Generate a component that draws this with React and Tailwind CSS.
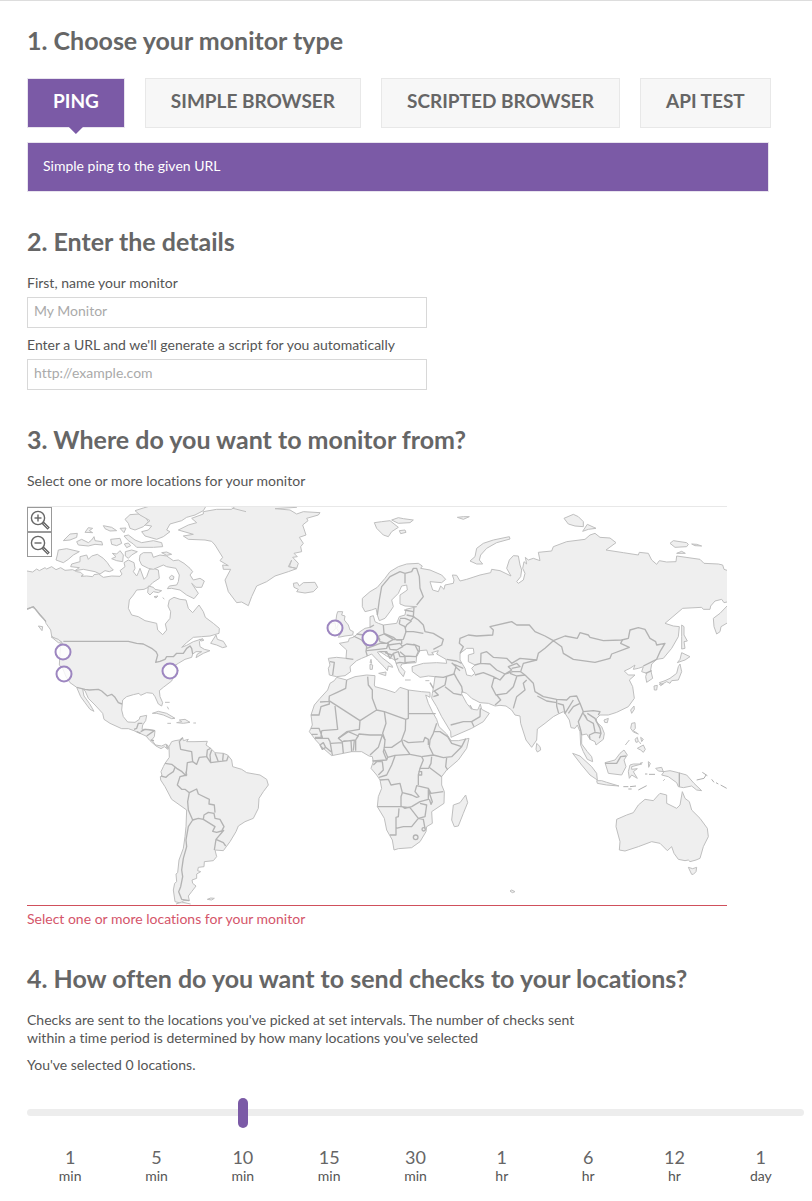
import React, { useState } from 'react';

const monitorTypes = [
  { name: 'Ping', text: 'Simple ping to the given URL' },
  { name: 'Simple Browser', text: 'Load a page in a real browser' },
  { name: 'Scripted Browser', text: 'Run a script in a real browser' },
  { name: 'API Test', text: 'Run a script against an API endpoint' },
];

const intervals = [
  ['1', 'min'],
  ['5', 'min'],
  ['10', 'min'],
  ['15', 'min'],
  ['30', 'min'],
  ['1', 'hr'],
  ['6', 'hr'],
  ['12', 'hr'],
  ['1', 'day'],
];

// pin positions as percentages of the map
const locations = [
  { name: 'Portland, OR, USA', x: 5.2, y: 36.4 },
  { name: 'San Francisco, CA, USA', x: 5.3, y: 41.9 },
  { name: 'Washington, DC, USA', x: 20.4, y: 41.1 },
  { name: 'Dublin, IE', x: 44, y: 30.4 },
  { name: 'Frankfurt, DE', x: 49, y: 32.9 },
];

const SectionTitle = ({ children }) => (
  <h2 className="text-[25px] leading-8 font-bold text-[#666]">{children}</h2>
);

const Zoom = ({ label, plus, onClick }) => (
  <button
    type="button"
    aria-label={label}
    onClick={onClick}
    className="flex size-[25px] items-center justify-center border border-[#999] bg-white text-[#666]"
  >
    <svg viewBox="0 0 20 20" className="size-5 shrink-0" fill="none" stroke="currentColor">
      <circle cx="8" cy="8" r="6.6" strokeWidth="1.4" />
      <path d="M4.5 8h7" strokeWidth="1.4" />
      {plus && <path d="M8 4.5v7" strokeWidth="1.4" />}
      <path d="M12.7 12.7l6 6" strokeWidth="3.2" />
      <path d="M13.6 13.6l4.4 4.4" stroke="#ccc" strokeWidth="1" />
    </svg>
  </button>
);

const WorldMap = () => (
  <svg
    viewBox="0 0 2100 1194"
    className="block w-full"
    fill="#efefef"
    stroke="#bfbfbf"
    strokeWidth="3"
    strokeLinejoin="round"
    aria-hidden="true"
  >
    {/* North and Central America */}
    <g transform="translate(-21 -21)">
      <path d="M15,213 L21,213 38,216 50,207 58,212 75,203 80,207 95,200 108,209 122,203 135,211 158,209 170,215 182,217 190,225 183,229 200,228 218,230 222,224 236,222 250,232 275,228 300,229 306,222 300,212 315,200 312,188 325,180 342,188 345,205 340,215 350,228 355,218 360,205 372,238 380,230 388,208 400,205 415,210 418,235 398,248 385,262 372,268 350,270 340,285 328,300 325,325 335,345 355,350 375,362 410,370 413,390 428,404 440,390 436,372 450,355 452,335 444,318 448,300 462,292 480,298 498,300 505,325 518,338 537,315 550,335 556,352 580,370 598,385 597,400 570,408 545,410 520,412 500,428 485,442 500,436 520,425 548,416 538,425 540,440 553,448 570,452 550,460 528,473 532,462 545,455 528,455 518,462 515,472 495,478 475,490 462,498 475,510 460,530 455,543 430,562 418,572 420,590 428,608 425,618 415,612 405,590 398,580 380,578 362,586 357,580 340,584 320,590 308,600 305,630 310,650 323,666 345,667 358,658 360,650 380,646 377,662 368,675 366,688 385,688 405,692 403,710 395,720 407,735 425,738 438,732 447,740 444,748 433,740 423,746 408,738 390,722 378,708 360,700 342,692 325,686 305,686 270,670 252,658 248,640 225,615 205,595 195,572 188,568 192,588 208,610 222,634 210,628 195,608 182,590 170,562 150,548 138,530 128,505 118,495 120,460 122,432 125,425 110,420 95,408 92,390 78,370 75,360 62,345 45,325 35,322 15,328" />
      <path d="M180,170 L200,165 205,178 215,168 232,163 250,175 262,188 270,200 280,210 268,215 255,212 240,222 225,215 190,208 165,212 178,203 152,200 155,192 180,185Z M115,150 L140,146 178,155 160,165 145,178 130,188 108,180 112,165Z M130,122 L150,102 172,100 170,112 150,120Z M195,97 L218,98 208,92 218,85 205,83Z M170,125 L185,118 205,128 215,120 222,110 225,122 245,125 248,135 225,133 205,138 175,135Z M250,77 L275,82 290,92 270,93 255,86Z M272,118 L300,115 305,130 290,137 275,133Z M300,85 L318,84 312,98Z M313,132 L325,129 332,137 320,143Z M312,108 L325,105 345,120 365,128 400,122 425,128 428,140 400,142 350,142 340,132 325,122Z M277,160 L290,162 300,152 310,165 308,185 290,182 275,176 288,170Z M316,155 L335,150 352,155 335,165 325,175 316,168Z M315,58 L330,44 355,42 375,50 385,65 370,80 345,90 330,85 325,70Z" />
      <path d="M345,32 L370,24 400,15 H560 L550,32 525,45 500,52 485,62 450,72 440,90 450,95 430,110 410,118 375,108 365,95 385,90 395,78 375,75 390,62 360,45Z" />
      <path d="M360,165 L370,158 395,158 400,172 420,165 440,168 460,182 475,180 492,190 510,205 518,215 510,225 520,240 540,235 553,243 545,262 528,262 515,250 535,280 522,296 500,285 480,270 455,265 442,266 448,258 470,255 475,245 478,225 468,205 440,200 430,195 400,208 385,205 365,195 358,180Z M425,158 L440,156 455,163 440,166Z M448,232 L455,226 462,230 460,238 451,239Z M385,258 L400,262 405,268 425,272 415,278 400,275 390,285 383,278Z M402,290 L414,288 408,294Z M428,293 L433,297" />
      <path d="M93,410 L115,418 128,430 115,428Z M55,378 L68,380 66,392Z M572,430 L588,405 592,418 610,424 620,440 608,443 590,435Z M537,418 L552,420 545,423Z" />
      <g stroke="#b3b3b3" strokeWidth="4" fill="none">
        <path d="M130,424 H325 L350,430 370,432 395,445 408,455 413,465 407,487 420,484 435,478 440,470 460,470 470,460 490,460 500,445 510,438 515,445 518,462" />
        <path d="M21,328 L40,320 60,345 78,365 M170,562 L195,568 208,570 235,568 245,573 262,588 275,583 285,592 295,608 306,612" />
        <path d="M342,688 L350,685 355,670 367,670 M350,695 L362,700 M362,695 L375,688 405,692 M380,708 L403,692 M392,720 L402,722 M440,735 L442,745" />
      </g>
    </g>

    {/* Greenland and Iceland */}
    <g transform="translate(399 -21)">
      <path d="M130,35 L170,28 215,28 230,15 H400 L410,22 345,26 390,30 410,42 430,35 480,38 475,45 440,55 444,62 428,75 438,105 418,112 430,130 422,140 425,155 402,160 412,170 398,172 415,190 410,205 385,200 395,180 388,200 410,206 385,215 345,228 320,245 290,258 275,290 265,317 245,306 230,308 205,275 195,240 212,208 190,208 188,195 205,197 180,182 188,172 165,135 155,124 135,120 85,118 70,108 100,103 55,90 85,75 110,68 95,55 130,42Z" />
      <path d="M400,250 L412,248 418,258 430,248 465,247 473,262 460,275 435,279 410,275 415,268 402,262Z" />
      <path d="M215,24 L258,35" fill="none" />
    </g>

    {/* Caribbean and South America */}
    <g transform="translate(99 489)">
      <path d="M277,130 L295,124 320,130 345,145 335,146 310,135 290,130Z M350,158 L365,155 358,150 375,148 390,157 370,160Z M400,159 H408 M322,160 H333 M315,97 H329 M322,110 L326,118" />
      <path d="M327,230 L335,215 345,212 358,210 368,203 370,212 385,208 380,215 405,215 442,214 438,225 452,235 465,248 490,250 503,255 515,270 518,290 545,298 560,308 600,315 620,328 625,345 610,365 597,385 595,415 580,445 555,455 535,468 528,485 510,515 490,542 465,540 470,560 460,572 433,575 432,590 415,592 413,602 422,605 410,612 410,625 396,630 398,640 408,648 395,665 385,678 388,692 370,692 365,700 345,695 340,660 344,640 350,635 348,612 353,608 357,570 370,535 375,500 378,470 380,420 335,388 315,350 302,330 301,320 306,316 303,305 310,290 315,280 328,262Z" />
      <path d="M348,702 L365,696 392,702 M442,688 L452,684 463,685 455,690Z" />
      <g stroke="#b3b3b3" strokeWidth="4" fill="none">
        <path d="M368,203 L358,215 362,238 395,245 398,275 410,283 418,262 440,260 442,240 452,235 M398,275 L382,278 378,317 366,305 350,295 335,283 315,280 M345,292 L340,305 325,315 318,322 303,318" />
        <path d="M378,305 L380,315 360,320 352,345 365,358 375,358 388,368 410,357 415,372 448,388 447,402 463,405 465,428 M388,368 L383,395 385,420 398,450 385,470 378,510 380,530 370,565 365,600 368,620 362,650 356,665 365,688 388,692" />
        <path d="M398,450 L415,445 430,448 432,435 445,427 462,430 465,445 480,448 492,470 485,483 470,487 458,484 465,470 430,448 M492,480 L468,508 463,540 M468,508 L490,518 497,528 M440,260 L452,278 475,275 500,272 505,258 M455,240 L450,255 452,278 M465,250 L470,262 475,275 M490,250 L488,272" />
      </g>
    </g>

    {/* Europe and Asia mainland */}
    <g transform="translate(789 -21)">
      <path d="M217,295 L240,275 262,262 285,235 300,215 325,200 350,192 385,190 397,198 392,205 420,210 455,225 467,238 455,248 420,245 428,270 445,275 452,258 462,268 465,255 490,250 492,240 487,225 500,226 510,243 530,238 570,225 602,218 605,208 630,212 663,228 650,205 658,180 670,167 685,168 690,195 695,210 692,230 680,245 685,250 700,240 705,220 698,205 702,185 710,192 706,172 715,180 730,175 750,182 745,157 785,153 790,140 830,125 885,118 900,105 915,100 930,112 960,114 978,128 948,150 1000,158 1045,165 1048,157 1075,160 1085,180 1100,193 1108,182 1130,186 1158,185 1160,168 1230,178 1242,190 1285,192 1298,195 1302,208 1320,214 1320,304 1302,308 1295,298 1275,303 1262,318 1260,328 1240,328 1235,322 1178,325 1125,370 1150,378 1168,380 1165,410 1145,445 1120,475 1100,478 1085,492 1082,510 1088,535 1070,547 1067,530 1070,520 1055,515 1060,500 1045,505 1030,508 1035,495 1020,505 1003,513 1015,525 1035,525 1018,540 1028,560 1033,595 1015,620 980,637 955,645 930,645 920,655 918,665 935,680 943,700 940,718 918,735 915,725 900,718 890,702 875,705 875,732 892,755 905,770 908,785 892,778 880,755 872,735 870,695 862,675 855,685 843,683 838,660 825,640 820,635 805,642 790,650 765,670 742,687 740,720 725,742 708,720 692,670 690,648 675,645 665,630 648,618 630,616 615,618 595,610 570,608 555,600 545,595 530,580 515,575 515,582 530,610 545,628 540,615 548,628 563,630 571,612 575,628 598,640 580,665 545,685 483,712 482,695 455,650 440,620 425,595 427,580 430,565 435,530 415,528 390,532 367,515 366,500 400,490 440,488 470,490 468,478 440,462 445,452 425,458 432,464 415,465 410,450 390,452 380,470 378,488 350,490 335,492 332,500 345,515 340,530 328,515 320,495 315,480 290,468 270,455 262,456 275,472 305,495 308,502 295,498 292,512 282,500 262,480 245,462 232,468 215,475 200,482 180,500 182,515 165,527 140,530 118,525 115,505 120,495 115,475 140,472 168,475 170,450 148,430 175,425 178,415 190,412 210,395 225,385 240,382 240,350 250,347 255,365 265,370 280,375 320,370 328,350 345,345 348,328 380,320 345,318 330,312 330,285 352,270 350,255 335,258 325,280 305,300 310,320 300,335 285,355 268,362 262,345 258,325 245,330 225,335 217,320Z" />
      <path fill="#fff" d="M510,460 L530,445 550,445 552,460 535,465 535,485 555,495 545,505 555,520 545,528 530,525 525,505 510,480Z" />
      <path d="M140,345 L143,335 158,335 155,345 165,348 163,360 175,375 180,390 190,395 188,405 165,408 145,412 150,403 140,385 145,372 138,360Z M118,372 L135,368 138,385 125,398 115,395Z" />
      <path d="M253,68 L275,65 300,62 325,82 305,95 295,110 280,105 260,85Z M305,60 L325,53 340,56 370,60 360,68 325,70Z M328,92 L345,90 348,97 332,101Z M502,52 L520,50 538,50 520,58Z" />
      <path d="M540,183 L555,170 560,145 580,130 610,120 658,110 660,117 620,128 590,145 572,165 568,180 578,192 560,192Z" />
      <path d="M243,478 L245,490 240,488Z M240,493 L248,495 247,508 240,508Z M266,520 L288,516 287,527Z M345,540 H362 M406,542 H418" />
      <g stroke="#b3b3b3" strokeWidth="4" fill="none">
        <path d="M262,345 L268,300 275,260 300,230 330,215 345,220 365,215 370,205 380,205 388,230 390,265 400,290 380,315 M345,220 L345,250 M343,330 L370,335 M330,355 L345,355 362,362 372,350 350,345 M372,322 L370,350 385,360 400,375 405,395 430,400 460,418 455,435 430,448 M345,385 L350,375 365,362 M345,395 L370,395 400,400" />
        <path d="M280,375 L282,400 310,412 320,420 340,418 348,395 345,380 328,372 M328,372 L330,358 M190,408 L215,420 230,440 228,455 232,468 M200,402 L222,405 M262,410 L282,402 310,418 290,430 270,425Z M230,445 L245,440 270,430 295,430 290,445 265,448 230,452 M295,435 L330,430 338,440 320,450 300,448Z M310,418 L335,420 335,432 M335,440 L350,432 375,435 385,455 378,470 345,468 330,455 M345,468 L345,488 375,485 M370,432 L388,440 388,455" />
        <path d="M268,455 L290,455 300,475 310,460 325,455 330,470 345,470 M285,458 L305,465 M310,460 L315,480 325,475 M318,490 L330,487 350,490 M270,420 L265,410 M240,382 L252,375 M120,485 L133,487 128,525 M168,475 L190,478" />
        <path d="M510,460 L520,440 508,430 510,415 535,405 560,408 608,405 610,390 600,380 665,365 680,375 718,375 735,395 765,408 790,422 825,408 862,415 870,398 895,405 900,412 940,422 995,420 1015,415 1020,390 1045,383 1065,388 1080,415 1097,425 1100,435 1125,430 1110,455 1100,478 1060,498" />
        <path d="M790,422 L815,440 820,460 850,478 915,487 960,475 965,462 1018,442 992,430 998,418 M790,422 L765,445 745,460 740,480 700,490 692,515 705,525 730,550 735,575 760,590 800,598 830,600 840,590 860,588 870,610 880,635 910,632 930,635 925,645" />
        <path d="M572,490 L573,460 590,455 610,472 650,475 665,490 690,475 740,480 M555,495 L572,490 600,492 620,510 645,522 665,510 655,500 680,490 690,500 665,505 M645,522 L668,515 692,515 M660,520 L680,528 705,525 M555,525 L580,518 610,530 630,540 645,522 M613,530 L605,560 618,585 650,580 670,560 680,530 M620,585 L632,600 615,615 M710,540 L700,550 705,570 680,590 670,625" />
        <path d="M485,488 L498,500 492,520 500,535 515,560 518,578 M435,530 L460,532 492,522 M470,530 L465,555 430,575 M465,560 L490,580 515,585 M430,590 L445,585 432,572 M482,675 L520,665 545,665 570,650 571,625 M545,665 L552,680 M470,478 L500,483 515,490 M490,492 L520,505 M498,502 L510,512 M430,565 L420,548" />
        <path d="M742,588 L770,603 800,608 M800,600 L800,618 806,640 M803,610 L820,615 825,640 850,600 M870,610 L850,620 835,640 M880,635 L865,665 872,690 875,705 M880,640 L892,660 910,670 915,695 M892,640 L915,655 930,685 933,700 928,715 M900,718 L898,705 915,697 933,700 M1067,520 L1085,512 M892,660 L885,645" />
      </g>
    </g>

    {/* Russian arctic islands, Kamchatka, Japan */}
    <g transform="translate(1419 -21)">
      <path d="M192,55 L220,43 235,50 250,65 250,80 225,78 205,72Z M248,94 L262,73 288,85 265,88Z M510,130 L520,122 560,128 565,133 560,140 525,142Z M575,132 L590,133 605,138 585,137Z M530,160 L545,154 556,160Z" />
      <path d="M690,310 L681,318 660,340 640,355 642,380 650,402 660,395 663,380 690,364" />
      <path d="M545,375 L552,380 552,405 562,423 552,425 555,445 545,447 545,410Z M532,488 L540,478 545,458 570,470 555,480 540,485Z M540,492 L545,515 535,540 515,542 510,550 500,545 485,553 478,548 495,542 510,535 530,520 535,500Z M462,558 L472,556 470,570 463,570Z M478,552 L490,552 482,557Z" />
    </g>

    {/* Africa */}
    <g transform="translate(804 459)">
      <path d="M125,52 L155,60 180,50 215,45 240,47 238,75 240,80 270,88 300,98 315,82 340,90 380,95 405,97 405,112 392,105 400,130 412,155 425,178 432,200 455,222 468,242 490,242 522,235 515,265 490,300 455,330 440,350 440,375 448,395 447,430 410,455 412,490 395,500 393,515 375,545 350,563 310,566 297,570 292,540 275,510 268,475 247,440 250,410 260,385 255,360 245,345 228,325 235,305 232,290 222,288 200,275 170,275 145,280 110,287 85,265 62,240 43,215 52,195 48,165 58,135 75,115 98,90 105,70 118,62Z" />
      <path d="M512,405 L518,428 505,460 490,498 478,500 470,480 475,435 495,428Z M645,693 L650,690 660,695 652,698Z" />
      <g stroke="#b3b3b3" strokeWidth="4" fill="none">
        <path d="M155,60 L152,85 125,98 103,108 102,122 195,182 245,150 232,115 232,90 220,75 218,50 M48,165 H72 L78,140 103,132 103,124 75,126 M120,138 L128,208 80,212 M195,182 L193,208 155,215 130,235 M245,150 L268,155 332,178 M340,90 V175 L332,178 331,210 320,240 325,255 345,283 380,290 M340,161 H422" />
        <path d="M268,155 L273,190 263,220 270,240 268,262 290,262 322,240 M268,268 L278,292 300,286 345,283 M325,240 L340,248 385,245 390,232 400,238 400,255 M425,190 L415,220 405,240 403,260 415,285 445,293 470,290 500,260 470,250 458,230 435,215 418,215 M415,285 L380,290 M410,290 L408,310 402,322 440,350 M455,293 L452,320 458,330 M380,290 L385,300 375,325 402,325 M500,260 L512,236" />
        <path d="M300,288 L290,315 275,345 252,352 M255,360 L280,358 288,375 315,370 322,398 350,405 365,412 372,410 360,395 365,377 400,385 408,400 445,395 M370,375 L370,345 375,325 M370,335 H380 V345 H370 M322,398 L318,410 318,438 330,445 350,440 375,425 400,418 400,388 M247,440 L318,440 345,443 370,475 390,470 395,435 375,430 M312,445 L310,470 303,472 303,525 285,525 M303,505 L325,500 350,500 370,475 385,478 390,505 M400,390 L412,425 408,433 403,418" />
        <circle cx="362" cy="532" r="7" />
        <circle cx="386" cy="508" r="5" />
        <path d="M48,205 L72,205 82,232 60,232 M50,223 H68 M60,235 H100 L105,245 108,262 112,285 M75,255 L85,248 92,262 82,268Z M92,262 L108,275 M108,250 L142,248 145,280 M145,243 L168,242 170,275 M178,240 L175,272 M182,272 L182,240 192,222 225,225 262,225 250,262 225,285 M130,235 L160,215 190,228 182,240 142,245Z M80,212 L78,230 M262,225 L270,240 M268,262 L265,275 275,300 232,303 M235,315 L245,305 262,305 265,330 250,345 M275,300 L278,292" />
      </g>
    </g>

    {/* South East Asia and Australia */}
    <g transform="translate(1419 459)">
      <path d="M402,138 L403,148 395,160 392,150Z M312,180 L325,175 322,188 314,187Z M110,250 L120,260 122,270 112,276 108,268Z M395,190 L405,188 406,205 400,212 415,222 400,216 392,205Z M412,265 L430,255 436,268 430,277 422,270Z M405,238 L412,232 415,245 408,247Z M422,232 L430,238 425,245Z M376,255 L388,240 M418,245 L422,252" />
      <path d="M218,280 L240,288 275,320 290,340 292,360 270,345 245,315Z M290,362 L305,362 320,367 357,378 320,375 292,370Z M315,308 L345,300 360,280 372,270 382,285 372,300 378,320 365,345 325,340Z M388,355 L385,335 390,315 400,312 425,312 395,320 395,328 412,326 400,335 412,355 395,345Z M445,305 L451,310 446,322Z M467,325 L485,322 490,335 510,332 535,338 560,345 582,370 605,392 590,390 575,378 550,383 535,380 530,368 505,350 485,345 492,335 475,333Z" />
      <path d="M370,380 H385 M390,380 L408,378 M415,390 L440,377 M385,387 H395 M435,342 H442 M447,343 H465 M490,362 L494,358 M590,360 L612,355 618,345 M607,337 L622,347 M635,358 L642,367 M648,368 L655,372 M662,375 L680,385 M420,310 L428,308" fill="none" stroke="#afafaf" />
      <path d="M480,400 L500,405 500,430 530,445 540,435 547,395 555,415 568,425 575,450 600,475 622,505 625,530 610,560 600,595 588,600 570,605 565,600 555,602 535,598 522,580 515,560 502,572 480,550 455,545 415,560 375,573 358,570 360,545 348,500 350,478 380,465 400,458 415,435 435,418 460,422 475,405Z M565,622 L578,626 590,622 588,635 580,643 575,643Z" />
      <path d="M315,310 L350,310 362,290 378,288 M538,338 V380" fill="none" stroke="#b3b3b3" strokeWidth="4" />
    </g>
  </svg>
);

const App = () => {
  const [type, setType] = useState(0);
  const [selected, setSelected] = useState([]);
  const [interval, setInterval] = useState(2);
  const [zoom, setZoom] = useState(1);

  const toggle = (name) =>
    setSelected(selected.includes(name) ? selected.filter((n) => n !== name) : [...selected, name]);

  return (
    <main className="border-t border-[#ddd] bg-white pt-[23px] pr-2 pb-4 pl-[27px] font-['Lato',sans-serif] text-sm leading-[18px] text-[#555] [font-variant-ligatures:none]">
      {/* Monitor type */}
      <section>
        <SectionTitle>1. Choose your monitor type</SectionTitle>
        <div className="mt-[22px] flex flex-wrap gap-5">
          {monitorTypes.map((item, i) => (
            <button
              key={item.name}
              type="button"
              onClick={() => setType(i)}
              className={
                i === type
                  ? 'relative h-[50px] border border-[#e8e4ee] bg-[#7b5aa6] px-[25px] pb-1 text-[19px] font-bold text-white uppercase'
                  : 'relative h-[50px] border border-[#e8e8e8] bg-[#f7f7f7] px-[25px] pb-1 text-[19px] font-bold text-[#666] uppercase'
              }
            >
              {item.name}
              {i === type && (
                <span className="absolute top-full left-1/2 h-[7px] w-[14px] -translate-x-1/2 bg-[#7b5aa6] [clip-path:polygon(0_0,100%_0,50%_100%)]" />
              )}
            </button>
          ))}
        </div>
        <p className="mt-[14px] mr-[35px] flex h-[50px] items-center border border-[#e8e4ee] bg-[#7b5aa6] px-[15px] pb-[2px] text-white">
          {monitorTypes[type].text}
        </p>
      </section>

      {/* Details */}
      <section className="mt-[33px]">
        <SectionTitle>2. Enter the details</SectionTitle>
        <div className="mt-[17px] flex max-w-[400px] flex-col">
          <label htmlFor="name">First, name your monitor</label>
          <input
            id="name"
            type="text"
            placeholder="My Monitor"
            className="mt-[5px] h-[31px] border border-[#d8d8d8] px-[6px] pb-[5px] outline-none placeholder:text-[#aaa]"
          />
          <label htmlFor="url" className="mt-2">
            Enter a URL and we'll generate a script for you automatically
          </label>
          <input
            id="url"
            type="text"
            placeholder="http://example.com"
            className="mt-[5px] h-[31px] border border-[#d8d8d8] px-[6px] pb-[5px] outline-none placeholder:text-[#aaa]"
          />
        </div>
      </section>

      {/* Locations */}
      <section className="mt-[33px]">
        <SectionTitle>3. Where do you want to monitor from?</SectionTitle>
        <p className="mt-[17px]">Select one or more locations for your monitor</p>
        <div className="relative mt-4 max-w-[700px] overflow-hidden border-t border-b border-t-[#e8e8e8] border-b-[#d0505c]">
          <div className="relative origin-center" style={{ transform: zoom === 1 ? undefined : `scale(${zoom})` }}>
            <WorldMap />
            {locations.map((loc) => (
              <button
                key={loc.name}
                type="button"
                aria-label={loc.name}
                aria-pressed={selected.includes(loc.name)}
                onClick={() => toggle(loc.name)}
                className="absolute size-[17px] -translate-x-1/2 -translate-y-1/2 rounded-full border-2 border-[#9d86c0] bg-white/80 aria-pressed:bg-[#7b5aa6]"
                style={{ left: `${loc.x}%`, top: `${loc.y}%` }}
              />
            ))}
          </div>
          <div className="absolute top-0 left-0 flex flex-col">
            <Zoom label="Zoom in" plus onClick={() => setZoom(Math.min(zoom + 1, 4))} />
            <Zoom label="Zoom out" onClick={() => setZoom(Math.max(zoom - 1, 1))} />
          </div>
        </div>
        {selected.length === 0 && (
          <p className="mt-1 text-[#d4556a]">Select one or more locations for your monitor</p>
        )}
      </section>

      {/* Frequency */}
      <section className="mt-[34px]">
        <SectionTitle>4. How often do you want to send checks to your locations?</SectionTitle>
        <p className="mt-[17px] max-w-[560px]">
          Checks are sent to the locations you've picked at set intervals. The number of checks sent within a time
          period is determined by how many locations you've selected
        </p>
        <p className="mt-[9px]">You've selected {selected.length} locations.</p>
        <input
          type="range"
          aria-label="Check interval"
          min="0"
          max="8"
          value={interval}
          onChange={(e) => setInterval(Number(e.target.value))}
          className="mt-[35px] block h-[7px] w-full appearance-none rounded bg-[#ededed] px-[38px] [&::-webkit-slider-thumb]:h-[30px] [&::-webkit-slider-thumb]:w-[10px] [&::-webkit-slider-thumb]:appearance-none [&::-webkit-slider-thumb]:rounded-[5px] [&::-webkit-slider-thumb]:bg-[#7b5aa6]"
        />
        <ul className="mt-[31px] grid grid-cols-9 text-center">
          {intervals.map(([count, unit], i) => (
            <li key={i}>
              <span className="block text-lg leading-5 text-[#666]">{count}</span>
              <span className="block">{unit}</span>
            </li>
          ))}
        </ul>
      </section>
    </main>
  );
};

export default App;
